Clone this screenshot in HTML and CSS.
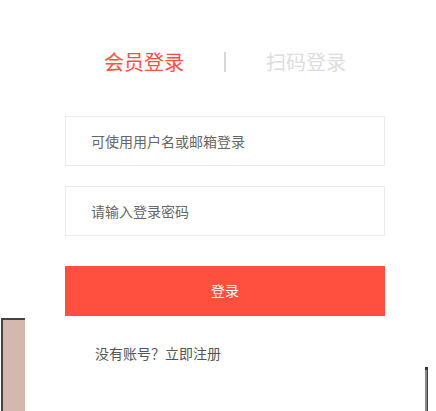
FILE: index.html
```html
<!DOCTYPE html>
<html lang="zh-CN">
<head>
<meta charset="utf-8">
<title>会员登录</title>
<link rel="stylesheet" href="styles.css">
</head>
<body>
<div class="page">
  <div class="login">
    <div class="tabs">
      <span class="tab active">会员登录</span>
      <span class="divider"></span>
      <span class="tab">扫码登录</span>
    </div>
    <div class="field"><input type="text" placeholder="可使用用户名或邮箱登录"></div>
    <div class="field"><input type="password" placeholder="请输入登录密码"></div>
    <button class="submit">登录</button>
    <div class="register">没有账号？立即注册</div>
  </div>
  <div class="deco-left"></div>
  <div class="deco-right"></div>
</div>
</body>
</html>
```
FILE: styles.css
```css
* { box-sizing: border-box; }
html, body {
  margin: 0;
  padding: 0;
  background: #fff;
  font-family: "Noto Sans CJK SC", "Microsoft YaHei", sans-serif;
}
.page {
  position: relative;
  width: 436px;
  height: 411px;
  overflow: hidden;
  padding-top: 50px;
}
.login {
  width: 320px;
  margin-left: 65px;
}
.tabs {
  display: flex;
  justify-content: center;
  align-items: center;
  gap: 40px;
  height: 24px;
  margin-bottom: 42px;
}
.tab {
  font-size: 20px;
  line-height: 24px;
  color: #ddd;
}
.tab.active {
  color: #ff4f3f;
}
.divider {
  width: 2px;
  height: 20px;
  background: #d6d6d6;
}
.field {
  margin-bottom: 20px;
}
.field input {
  display: block;
  width: 320px;
  height: 50px;
  border: 1px solid #ebebeb;
  padding: 0 0 1px 25px;
  font-family: inherit;
  font-size: 14px;
  color: #333;
  outline: none;
  background: #fff;
}
.field input::placeholder {
  color: #666;
}
.submit {
  display: block;
  width: 320px;
  height: 50px;
  margin-top: 30px;
  border: none;
  padding: 0 0 2px;
  background: #ff4f3f;
  color: #fff;
  font-family: inherit;
  font-size: 14px;
  cursor: pointer;
}
.register {
  margin-top: 27px;
  padding-left: 30px;
  font-size: 14px;
  line-height: 20px;
  color: #555;
}
.deco-left {
  position: absolute;
  left: 1px;
  top: 318px;
  width: 24px;
  height: 100px;
  background: #d4b8ae;
  border-top: 2px solid #444;
  border-left: 2px solid #444;
}
.deco-right {
  position: absolute;
  left: 425px;
  top: 367px;
  width: 3px;
  height: 50px;
  background: #888;
  border-top: 3px solid #333;
  border-right: 1px solid #444;
}
```
